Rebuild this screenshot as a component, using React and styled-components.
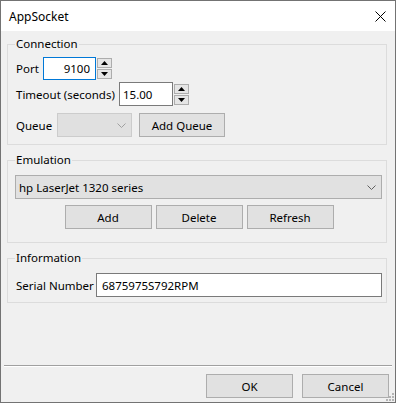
import React from "react";
import styled, { createGlobalStyle } from "styled-components";

const Global = createGlobalStyle`
  html, body { margin: 0; padding: 0; background: #f0f0f0; }
  body { font-family: "Noto Sans", "Open Sans", sans-serif; font-size: 11.5px; color: #000; }
  * { box-sizing: border-box; }
`;

const Window = styled.div`
  position: relative;
  width: 396px;
  height: 403px;
  border: 1px solid #737373;
  display: flex;
  flex-direction: column;
  background: #f0f0f0;
  overflow: hidden;
`;

const TitleBar = styled.div`
  height: 30px;
  flex: none;
  background: #fff;
  display: flex;
  align-items: center;
  justify-content: space-between;
  padding: 0 9px 0 8px;
  font-size: 12px;
`;

const Body = styled.div`
  flex: 1;
  padding: 5px 8px 0 6px;
  display: flex;
  flex-direction: column;
  gap: 7px;
`;

const Group = styled.fieldset`
  margin: 0;
  flex: none;
  border: 1px solid #dcdcdc;
  padding: ${(p) => p.$pad || "5px 4px 7px 8px"};
  min-width: 0;
  display: flex;
  flex-direction: column;
`;

const Legend = styled.legend`
  padding: 0 1px;
  margin-left: -1px;
  line-height: 16px;
  height: 16px;
`;

const Row = styled.div`
  display: flex;
  align-items: center;
  gap: ${(p) => p.$gap || "0px"};
  margin-top: ${(p) => p.$mt || "0px"};
  justify-content: ${(p) => p.$justify || "flex-start"};
`;

const Label = styled.span`
  width: ${(p) => p.$w}px;
  flex: none;
  white-space: nowrap;
`;

const TextBox = styled.div`
  width: ${(p) => p.$w}px;
  height: ${(p) => p.$h || 24}px;
  flex: ${(p) => (p.$grow ? 1 : "none")};
  background: #fff;
  border: 1px solid ${(p) => (p.$focus ? "#0078d7" : "#7a7a7a")};
  display: flex;
  align-items: center;
  justify-content: ${(p) => (p.$right ? "flex-end" : "flex-start")};
  padding: 0 5px 0 ${(p) => p.$pl || 3}px;
  white-space: nowrap;
`;

const Spinner = styled.div`
  display: flex;
  flex-direction: column;
  gap: 1px;
  margin-left: 1px;
`;

const SpinButton = styled.div`
  width: 15px;
  height: 10px;
  border: 1px solid #adadad;
  background: #e5e5e5;
  display: flex;
  align-items: center;
  justify-content: center;
`;

const Combo = styled.div`
  width: ${(p) => (p.$w ? `${p.$w}px` : "auto")};
  flex: ${(p) => (p.$grow ? 1 : "none")};
  height: 24px;
  background: ${(p) => (p.$disabled ? "#e0e0e0" : "#e1e1e1")};
  border: 1px solid ${(p) => (p.$disabled ? "#cccccc" : "#adadad")};
  display: flex;
  align-items: center;
  justify-content: space-between;
  padding: 0 5px 0 3px;
  margin-left: ${(p) => p.$ml || "0px"};
  margin-right: ${(p) => p.$mr || "0px"};
  white-space: nowrap;
`;

const Button = styled.div`
  width: ${(p) => p.$w || 87}px;
  height: 24px;
  flex: none;
  background: #e1e1e1;
  border: 1px solid #adadad;
  display: flex;
  align-items: center;
  justify-content: center;
  white-space: nowrap;
`;

const Footer = styled.div`
  flex: none;
  display: flex;
  flex-direction: column;
`;

const Separator = styled.div`
  margin: 0 3px;
  border-top: 1px solid #a0a0a0;
  border-bottom: 1px solid #ffffff;
`;

const ButtonBar = styled.div`
  display: flex;
  justify-content: flex-end;
  gap: 9px;
  padding: 7px 6px 4px 0;
`;

const Grip = styled.svg`
  position: absolute;
  right: 1px;
  bottom: 1px;
`;

const Chevron = ({ color = "#606060" }) => (
  <svg width="9" height="5" viewBox="0 0 9 5">
    <path d="M0.5 0.5 L4.5 4.5 L8.5 0.5" fill="none" stroke={color} strokeWidth="1" />
  </svg>
);

const Up = () => (
  <svg width="7" height="4" viewBox="0 0 7 4">
    <path d="M3.5 0 L7 4 L0 4 Z" fill="#000" />
  </svg>
);
const Down = () => (
  <svg width="7" height="4" viewBox="0 0 7 4">
    <path d="M0 0 L7 0 L3.5 4 Z" fill="#000" />
  </svg>
);

const Spin = () => (
  <Spinner>
    <SpinButton><Up /></SpinButton>
    <SpinButton><Down /></SpinButton>
  </Spinner>
);

export default function App() {
  return (
    <>
      <Global />
      <Window>
        <TitleBar>
          <span>AppSocket</span>
          <svg width="11" height="11" viewBox="0 0 11 11">
            <path d="M0.5 0.5 L10.5 10.5 M10.5 0.5 L0.5 10.5" stroke="#000" strokeWidth="1" />
          </svg>
        </TitleBar>
        <Body>
          <Group $pad="5px 4px 7px 8px">
            <Legend>Connection</Legend>
            <Row>
              <Label $w={27}>Port</Label>
              <TextBox $w={53} $h={23} $focus $right>9100</TextBox>
              <Spin />
            </Row>
            <Row $mt="2px">
              <Label $w={103}>Timeout (seconds)</Label>
              <TextBox $w={54}>15.00</TextBox>
              <Spin />
            </Row>
            <Row $mt="7px">
              <Label $w={41}>Queue</Label>
              <Combo $w={75} $disabled $mr="7px">
                <span />
                <Chevron color="#a0a0a0" />
              </Combo>
              <Button $w={86}>Add Queue</Button>
            </Row>
          </Group>
          <Group $pad="7px 4px 13px 8px">
            <Legend>Emulation</Legend>
            <Row>
              <Combo $grow $ml="-1px">
                <span>hp LaserJet 1320 series</span>
                <Chevron />
              </Combo>
            </Row>
            <Row $mt="6px" $gap="4px" $justify="center">
              <Button>Add</Button>
              <Button>Delete</Button>
              <Button>Refresh</Button>
            </Row>
          </Group>
          <Group $pad="7px 4px 5px 8px">
            <Legend>Information</Legend>
            <Row>
              <Label $w={80}>Serial Number</Label>
              <TextBox $grow $pl={5}>6875975S792RPM</TextBox>
            </Row>
          </Group>
        </Body>
        <Footer>
          <Separator />
          <ButtonBar>
            <Button>OK</Button>
            <Button>Cancel</Button>
          </ButtonBar>
        </Footer>
        <Grip width="8" height="8" viewBox="0 0 8 8">
          <g fill="#b4b4b4">
            <rect x="6" y="0" width="2" height="2" />
            <rect x="3" y="3" width="2" height="2" />
            <rect x="6" y="3" width="2" height="2" />
            <rect x="0" y="6" width="2" height="2" />
            <rect x="3" y="6" width="2" height="2" />
            <rect x="6" y="6" width="2" height="2" />
          </g>
        </Grip>
      </Window>
    </>
  );
}
